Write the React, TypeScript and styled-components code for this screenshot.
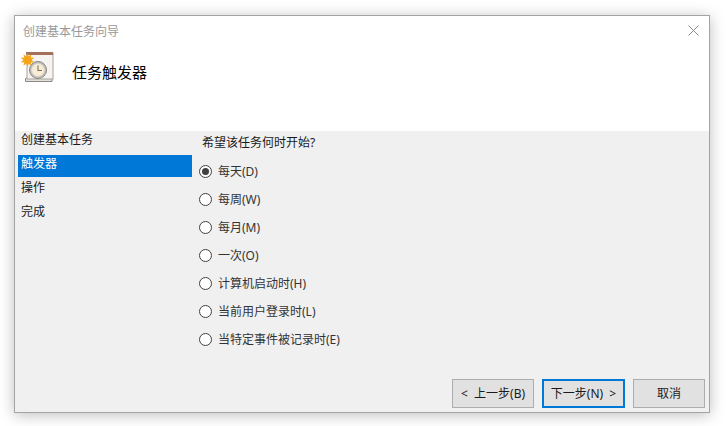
import React from 'react';
import styled, { createGlobalStyle } from 'styled-components';

const GlobalStyle = createGlobalStyle`
  html, body {
    margin: 0;
    padding: 0;
    width: 726px;
    height: 426px;
    overflow: hidden;
    background: #ffffff;
    font-family: "Noto Sans", "Noto Sans CJK SC", sans-serif;
    font-size: 12px;
  }
`;

const Page = styled.div`
  width: 726px;
  height: 426px;
  padding: 15px 16px 13px 14px;
  box-sizing: border-box;
`;

const Window = styled.div`
  width: 696px;
  height: 398px;
  box-sizing: border-box;
  border: 1px solid #a3a3a3;
  box-shadow: 0 2px 14px rgba(0, 0, 0, 0.26);
  background: #f0f0f0;
  display: flex;
  flex-direction: column;
`;

const Header = styled.div`
  height: 115px;
  background: #ffffff;
  flex: none;
`;

const TitleBar = styled.div`
  height: 29px;
  padding: 0 10px 0 8px;
  display: flex;
  align-items: center;
  justify-content: space-between;
`;

const WindowTitle = styled.div`
  color: #999999;
  font-size: 12px;
`;

const CloseButton = styled.svg`
  width: 11px;
  height: 11px;
  display: block;
`;

const Banner = styled.div`
  display: flex;
  align-items: flex-start;
  padding-left: 6px;
  margin-top: 7px;
`;

const BannerIcon = styled.svg`
  width: 33px;
  height: 32px;
  display: block;
  flex: none;
`;

const BannerTitle = styled.div`
  margin-left: 18px;
  margin-top: 9px;
  font-size: 15px;
  line-height: 22px;
  color: #000000;
`;

const Body = styled.div`
  flex: 1;
  display: flex;
  min-height: 0;
`;

const Sidebar = styled.div`
  width: 174px;
  margin-left: 3px;
  flex: none;
`;

const SideItem = styled.div<{ $active?: boolean }>`
  height: ${(p) => (p.$active ? '22px' : '24px')};
  margin-bottom: ${(p) => (p.$active ? '2px' : '0')};
  line-height: 18px;
  padding-left: 3px;
  box-sizing: border-box;
  color: ${(p) => (p.$active ? '#ffffff' : '#1a1a1a')};
  background: ${(p) => (p.$active ? '#0078d7' : 'transparent')};
`;

const Main = styled.div`
  flex: 1;
  display: flex;
  flex-direction: column;
  padding-left: 7px;
`;

const Question = styled.div`
  margin-left: 3px;
  height: 26px;
  line-height: 24px;
  color: #1a1a1a;
`;

const OptionList = styled.div`
  display: flex;
  flex-direction: column;
`;

const OptionRow = styled.div`
  height: 28px;
  display: flex;
  align-items: center;
  color: #333333;
`;

const OptionLabel = styled.span`
  line-height: 16px;
  padding-top: 2px;
`;

const RadioCircle = styled.span<{ $checked?: boolean }>`
  width: 13px;
  height: 13px;
  box-sizing: border-box;
  flex: none;
  border: 1px solid #404040;
  border-radius: 50%;
  background: #ffffff;
  display: flex;
  align-items: center;
  justify-content: center;
  margin-right: 6px;

  &::after {
    content: '';
    display: ${(p) => (p.$checked ? 'block' : 'none')};
    width: 7px;
    height: 7px;
    border-radius: 50%;
    background: #404040;
  }
`;

const Footer = styled.div`
  margin-top: auto;
  height: 33px;
  padding-right: 4px;
  flex: none;
  display: flex;
  gap: 8px;
  justify-content: flex-end;
  align-items: flex-start;
`;

const Button = styled.button<{ $width: number; $primary?: boolean }>`
  width: ${(p) => p.$width}px;
  height: 29px;
  box-sizing: border-box;
  padding: 0 0 2px;
  background: #e1e1e1;
  border: ${(p) => (p.$primary ? '2px solid #0078d7' : '1px solid #adadad')};
  color: #1a1a1a;
  font: inherit;
  font-size: 12px;
  white-space: pre;
`;

const options = [
  '每天(D)',
  '每周(W)',
  '每月(M)',
  '一次(O)',
  '计算机启动时(H)',
  '当前用户登录时(L)',
  '当特定事件被记录时(E)'
];

const starPoints = Array.from({ length: 20 }, (_, i) => {
  const radius = i % 2 === 0 ? 7 : 4;
  const angle = (i * Math.PI) / 10;
  return `${(6.5 + radius * Math.sin(angle)).toFixed(1)},${(8 - radius * Math.cos(angle)).toFixed(1)}`;
}).join(' ');

const TaskIcon = () => (
  <BannerIcon viewBox="0 0 33 32">
    <path d="M4.500 26.500l1-1H31v4H4.500z" fill="#e4e1dc" stroke="#8b8681" />
    <rect x="6" y="1" width="26" height="26" fill="#f6f4f0" stroke="#a8a39d" strokeWidth="1" />
    <rect x="5" y="0" width="27" height="3" fill="#a5705a" />
    <circle cx="17" cy="18" r="8.500" fill="#c3beb8" stroke="#8d8883" />
    <circle cx="17" cy="18" r="6.200" fill="#f8edd0" stroke="#e6e2dc" />
    <path d="M17 13.500v5h4" fill="none" stroke="#77726d" strokeWidth="1.100" />
    <polygon points={starPoints} fill="#f5a418" />
  </BannerIcon>
);

const App = () => (
  <Page>
    <GlobalStyle />
    <Window>
      <Header>
        <TitleBar>
          <WindowTitle>创建基本任务向导</WindowTitle>
          <CloseButton viewBox="0 0 11 11">
            <path d="M.5.5l10 10M10.500.5l-10 10" stroke="#8a8a8a" strokeWidth="1" fill="none" />
          </CloseButton>
        </TitleBar>
        <Banner>
          <TaskIcon />
          <BannerTitle>任务触发器</BannerTitle>
        </Banner>
      </Header>
      <Body>
        <Sidebar>
          <SideItem>创建基本任务</SideItem>
          <SideItem $active>触发器</SideItem>
          <SideItem>操作</SideItem>
          <SideItem>完成</SideItem>
        </Sidebar>
        <Main>
          <Question>希望该任务何时开始?</Question>
          <OptionList>
            {options.map((label, index) => (
              <OptionRow key={label}>
                <RadioCircle $checked={index === 0} />
                <OptionLabel>{label}</OptionLabel>
              </OptionRow>
            ))}
          </OptionList>
          <Footer>
            <Button $width={82}>{'<  上一步(B)'}</Button>
            <Button $width={83} $primary>{'下一步(N)  >'}</Button>
            <Button $width={72}>取消</Button>
          </Footer>
        </Main>
      </Body>
    </Window>
  </Page>
);

export default App;
